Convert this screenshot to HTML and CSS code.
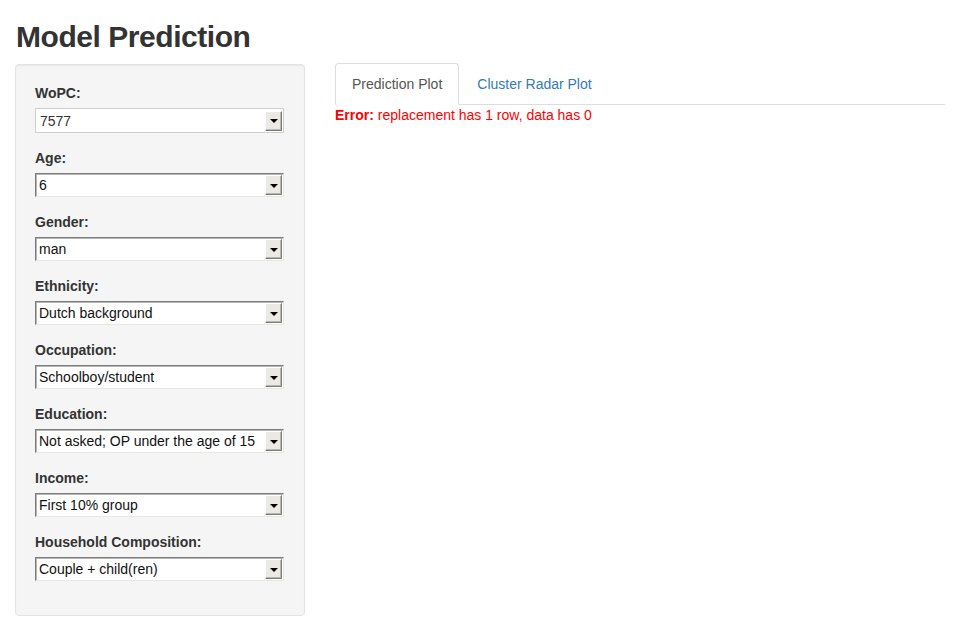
FILE: index.html
```html
<!DOCTYPE html>
<html>
<head>
<meta charset="utf-8">
<link rel="stylesheet" href="styles.css">
</head>
<body>
<div class="container">
  <h2 class="title">Model Prediction</h2>
  <div class="row">
    <div class="sidebar">
      <div class="well">
        <div class="form-group">
          <label class="lbl">WoPC:</label>
          <div class="sel sel-first"><span class="val">7577</span><span class="btn"><span class="tri"></span></span></div>
        </div>
        <div class="form-group">
          <label class="lbl">Age:</label>
          <div class="sel"><span class="val">6</span><span class="btn"><span class="tri"></span></span></div>
        </div>
        <div class="form-group">
          <label class="lbl">Gender:</label>
          <div class="sel"><span class="val">man</span><span class="btn"><span class="tri"></span></span></div>
        </div>
        <div class="form-group">
          <label class="lbl">Ethnicity:</label>
          <div class="sel"><span class="val">Dutch background</span><span class="btn"><span class="tri"></span></span></div>
        </div>
        <div class="form-group">
          <label class="lbl">Occupation:</label>
          <div class="sel"><span class="val">Schoolboy/student</span><span class="btn"><span class="tri"></span></span></div>
        </div>
        <div class="form-group">
          <label class="lbl">Education:</label>
          <div class="sel"><span class="val">Not asked; OP under the age of 15</span><span class="btn"><span class="tri"></span></span></div>
        </div>
        <div class="form-group">
          <label class="lbl">Income:</label>
          <div class="sel"><span class="val">First 10% group</span><span class="btn"><span class="tri"></span></span></div>
        </div>
        <div class="form-group">
          <label class="lbl">Household Composition:</label>
          <div class="sel"><span class="val">Couple + child(ren)</span><span class="btn"><span class="tri"></span></span></div>
        </div>
      </div>
    </div>
    <div class="main">
      <ul class="tabs">
        <li class="tab active">Prediction Plot</li>
        <li class="tab link">Cluster Radar Plot</li>
      </ul>
      <div class="error"><b>Error:</b> replacement has 1 row, data has 0</div>
    </div>
  </div>
</div>
</body>
</html>
```
FILE: styles.css
```css
* { box-sizing: border-box; }
html, body { margin: 0; padding: 0; background: #fff; }
body {
  font-family: "Liberation Sans", Arial, sans-serif;
  font-size: 14px;
  line-height: 20px;
  color: #333;
  width: 960px;
}
.container { padding: 0 15px; }
.title {
  font-size: 30px;
  font-weight: bold;
  line-height: 33px;
  margin: 20px 0 10px 1px;
  color: #333;
  letter-spacing: -0.45px;
}
.row { display: flex; margin: 0 -15px; }
.sidebar { width: 320px; padding: 0 15px; }
.main { width: 640px; padding: 0 15px; }
.well {
  margin-top: 1px;
  background: #f5f5f5;
  border: 1px solid #e3e3e3;
  border-radius: 4px;
  box-shadow: inset 0 1px 1px rgba(0,0,0,0.05);
  padding: 18px 19px 19px;
}
.form-group { margin-bottom: 15px; }
.lbl {
  display: block;
  font-weight: bold;
  margin-bottom: 5px;
  line-height: 20px;
}
.sel {
  display: flex;
  align-items: center;
  height: 24px;
  width: 249px;
  background: #fff;
  border: 1px solid;
  border-color: #7b7b7b #e8e6e3 #e8e6e3 #7b7b7b;
  box-shadow: inset 1px 1px 0 #b5b5b5;
  padding-left: 3px;
  font-size: 14px;
  color: #111;
}
.sel-first {
  height: 25px;
  border-color: #cfcfcf;
  box-shadow: none;
  padding-left: 4px;
  color: #333;
}
.val { flex: 1; white-space: nowrap; overflow: hidden; }
.btn {
  width: 17px;
  height: 20px;
  margin-right: 1px;
  background: #ece9e4;
  border: 1px solid;
  border-color: #fff #7e7e7e #7e7e7e #fff;
  box-shadow: inset -1px -1px 0 #b9b6b0;
  display: flex;
  align-items: center;
  justify-content: center;
}
.tri {
  width: 0; height: 0;
  border-left: 4px solid transparent;
  border-right: 4px solid transparent;
  border-top: 4px solid #000;
  margin-top: 1px;
}
.tabs {
  list-style: none;
  margin: 0;
  padding: 0;
  display: flex;
  border-bottom: 1px solid #ddd;
}
.tab {
  padding: 10px 16px;
  line-height: 20px;
  margin-right: 2px;
  margin-bottom: -1px;
  border: 1px solid transparent;
  border-radius: 4px 4px 0 0;
}
.tab.active {
  color: #555;
  background: #fff;
  border-color: #ddd #ddd transparent #ddd;
}
.tab.link { color: #337ab7; padding-left: 15px; }
.error {
  color: red;
  line-height: 20px;
}
```
